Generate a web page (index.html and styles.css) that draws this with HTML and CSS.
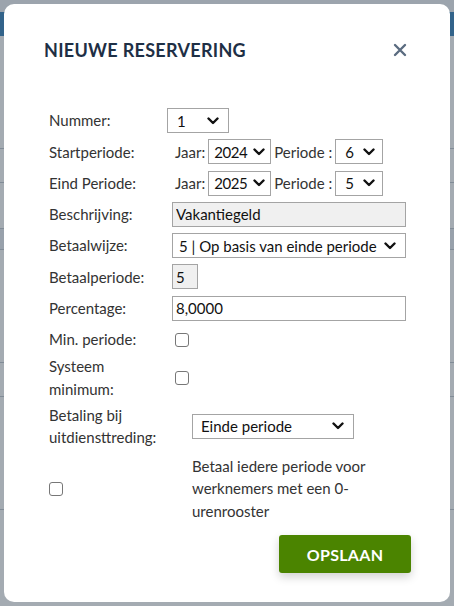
FILE: index.html
```html
<!DOCTYPE html>
<html lang="nl">
  <head>
    <meta charset="utf-8" />
    <title>Reserveringen</title>
    <link rel="stylesheet" href="styles.css">
  </head>
  <body>
    <!-- page behind the dialog -->
    <div class="page">
      <div class="topbar"></div>
      <div class="navbar"></div>
      <div class="grid-row tall"></div>
      <div class="grid-row"></div>
      <div class="grid-row mid"></div>
      <div class="grid-row head"></div>
      <div class="grid-row tall"></div>
      <div class="grid-row"></div>
      <div class="grid-row tall"></div>
    </div>
    <div class="overlay"></div>

    <div class="modal">
      <div class="modal-head">
        <h2>NIEUWE RESERVERING</h2>
        <button class="close" aria-label="Sluiten">
          <svg width="14" height="14" viewBox="0 0 14 14">
            <path d="M2 2 L12 12 M12 2 L2 12" stroke="#5b6c80" stroke-width="2.4" stroke-linecap="round" />
          </svg>
        </button>
      </div>

      <form class="form">
        <div class="row">
          <label>Nummer:</label>
          <div class="field">
            <select class="sel-num"><option>1</option></select>
          </div>
        </div>
        <div class="row">
          <label>Startperiode:</label>
          <div class="field">
            <span class="jaar">Jaar:</span>
            <select class="sel-year"><option>2024</option></select>
            <span class="per">Periode :</span>
            <select class="sel-per"><option>6</option></select>
          </div>
        </div>
        <div class="row">
          <label>Eind Periode:</label>
          <div class="field">
            <span class="jaar">Jaar:</span>
            <select class="sel-year"><option>2025</option></select>
            <span class="per">Periode :</span>
            <select class="sel-per"><option>5</option></select>
          </div>
        </div>
        <div class="row">
          <label>Beschrijving:</label>
          <div class="field">
            <input class="inp wide" type="text" value="Vakantiegeld" readonly>
          </div>
        </div>
        <div class="row">
          <label>Betaalwijze:</label>
          <div class="field">
            <select class="sel-wide"><option>5 | Op basis van einde periode</option></select>
          </div>
        </div>
        <div class="row">
          <label>Betaalperiode:</label>
          <div class="field">
            <input class="inp short" type="text" value="5" readonly>
          </div>
        </div>
        <div class="row">
          <label>Percentage:</label>
          <div class="field">
            <input class="inp wide open" type="text" value="8,0000">
          </div>
        </div>
        <div class="row">
          <label>Min. periode:</label>
          <div class="field">
            <input class="chk" type="checkbox">
          </div>
        </div>
        <div class="row multi">
          <label>Systeem minimum:</label>
          <div class="field">
            <input class="chk" type="checkbox">
          </div>
        </div>
        <div class="row multi">
          <label>Betaling bij uitdiensttreding:</label>
          <div class="field">
            <select class="sel-end"><option>Einde periode</option></select>
          </div>
        </div>
        <div class="row note-row">
          <div class="note-chk"><input class="chk" type="checkbox"></div>
          <p class="note">Betaal iedere periode voor werknemers met een 0-urenrooster</p>
        </div>
      </form>

      <div class="modal-foot">
        <button class="save">OPSLAAN</button>
      </div>
    </div>
  </body>
</html>
```

FILE: styles.css
```css
body {
  margin: 0;
  font: 15px/22.5px Lato, "Liberation Sans", sans-serif;
  color: #333;
  background: #fff;
  height: 606px;
  overflow: hidden;
}

/* background page */
.page {
  width: 454px;
}

.topbar {
  height: 12px;
  background: #eef1f4;
}

.navbar {
  height: 24px;
  background: #1b6fae;
}

.grid-row {
  height: 33px;
  border-bottom: 1px solid #b9c1c9;
  background: #fff;
}

.grid-row.tall {
  height: 112px;
}

.grid-row.mid {
  height: 45px;
}

.grid-row.head {
  height: 20px;
  background: #e6ebf0;
}

.overlay {
  position: fixed;
  inset: 0;
  background: rgba(74, 88, 102, 0.5);
}

/* dialog */
.modal {
  position: fixed;
  left: 4px;
  top: 4px;
  width: 446px;
  height: 598px;
  background: #fff;
  border-radius: 10px;
  box-sizing: border-box;
  padding: 33px 43px 0 45px;
}

.modal-head {
  display: flex;
  justify-content: space-between;
  align-items: center;
  margin-left: -5px;
}

.modal-head h2 {
  margin: 0;
  font: bold 18px/26px Lato, sans-serif;
  color: #1e2f45;
  letter-spacing: 0.3px;
}

.close {
  border: 0;
  background: none;
  padding: 0;
  width: 14px;
  height: 14px;
  display: flex;
}

.form {
  margin-top: 45px;
  display: flex;
  flex-direction: column;
  gap: 6.3px;
}

.row {
  display: flex;
  align-items: center;
  min-height: 25px;
}

.row label {
  width: 118px;
  flex: none;
}

.row.multi label {
  width: 112px;
}

.row.multi {
  margin-top: -3px;
}

.field {
  display: flex;
  align-items: center;
  flex: 1;
}

select,
.inp {
  font: 15px Lato, sans-serif;
  color: #111;
  height: 25px;
  border: 1px solid #a4a4a4;
  border-radius: 0;
  background: #fff;
  box-sizing: border-box;
  margin: 0;
}

/* selects get a bold chevron instead of the native arrow */
select {
  appearance: none;
  -webkit-appearance: none;
  padding: 0 24px 0 6px;
  background: #fff url("data:image/svg+xml,%3Csvg xmlns='http://www.w3.org/2000/svg' width='12' height='8' viewBox='0 0 12 8'%3E%3Cpath d='M1.5 1.5 L6 6 L10.5 1.5' fill='none' stroke='%23111' stroke-width='2.4' stroke-linecap='round' stroke-linejoin='round'/%3E%3C/svg%3E") no-repeat right 9px center;
}

.sel-num {
  width: 62px;
  padding-left: 9px;
}

.jaar {
  margin-left: 8px;
  margin-right: 3px;
}

.sel-year {
  width: 63px;
  padding: 0 0 0 5px;
  letter-spacing: -0.4px;
  background-position: right 5px center;
}

.per {
  margin-left: 3px;
  margin-right: 3px;
}

.sel-per {
  width: 48px;
  padding: 0 0 0 9px;
  background-position: right 7px center;
}

.inp {
  padding: 0 3px;
  background: #f0f0f0;
  outline: none;
}

.inp.open {
  background: #fff;
}

.wide {
  width: 234px;
  margin-left: 5px;
}

.short {
  width: 26px;
  margin-left: 5px;
}

.sel-wide {
  width: 234px;
  margin-left: 5px;
  padding-left: 6px;
}

.sel-end {
  width: 162px;
  margin-left: 31px;
  padding-left: 8px;
}

.chk {
  appearance: none;
  -webkit-appearance: none;
  width: 14px;
  height: 14px;
  margin: 0 0 0 8px;
  border: 1.5px solid #777;
  border-radius: 3px;
  background: #fff;
  box-sizing: border-box;
}

.multi .chk {
  margin-left: 14px;
}

.note-row {
  margin-top: 0;
  align-items: center;
}

.note-chk {
  width: 143px;
  flex: none;
}

.note-chk .chk {
  margin-left: 0;
  display: block;
}

.note {
  margin: 0;
  width: 200px;
}

.modal-foot {
  display: flex;
  justify-content: flex-end;
  margin-top: 13px;
  margin-right: -4px;
}

.save {
  width: 132px;
  height: 38px;
  border: 0;
  border-radius: 3px;
  background: #4b8400;
  color: #fff;
  font: bold 16px Lato, sans-serif;
  letter-spacing: 0.3px;
  box-shadow: 0 4px 10px rgba(0, 0, 0, 0.18);
}
```
